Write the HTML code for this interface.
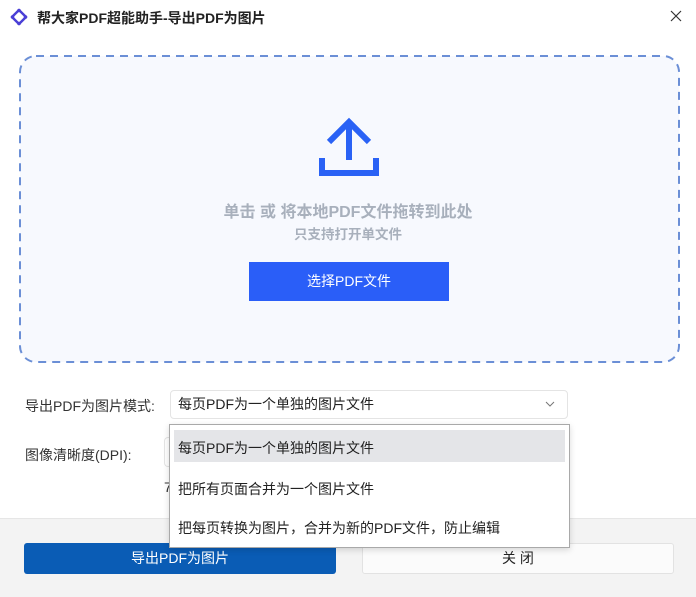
<!DOCTYPE html>
<html><head><meta charset="utf-8"><style>
*{margin:0;padding:0;box-sizing:border-box}
body{width:696px;height:597px;background:#fff;font-family:"Liberation Sans","Noto Sans CJK SC",sans-serif;position:relative;overflow:hidden;color:#333}
.abs{position:absolute}
.t{font-size:14px;white-space:nowrap}
</style></head><body>
<svg class="abs" style="left:10px;top:8px" width="18" height="18" viewBox="0 0 18 18"><path d="M9 2 L16 9 L9 16 L2 9 Z" fill="none" stroke="#4a3fd6" stroke-width="2.4" stroke-linejoin="round"/><circle cx="9" cy="2.5" r="1.8" fill="#4a3fd6"/><circle cx="15.5" cy="9" r="1.8" fill="#4a3fd6"/><circle cx="9" cy="15.5" r="1.8" fill="#4a3fd6"/><circle cx="2.5" cy="9" r="1.8" fill="#4a3fd6"/></svg>
<div class="abs t" style="left:37px;top:8px;font-weight:bold;color:#222">帮大家PDF超能助手-导出PDF为图片</div>
<svg class="abs" style="left:670px;top:10px" width="12" height="12"><path d="M1 1L11 11M11 1L1 11" stroke="#333" stroke-width="1.2"/></svg>

<svg class="abs" style="left:0;top:0" width="696" height="380"><rect x="20" y="56" width="659" height="306" rx="16" fill="#f7f9fe" stroke="#6b8fd6" stroke-width="2" stroke-dasharray="8 6"/>
<path d="M329 142 L349 122 L369 142 M349 122 L349 160" fill="none" stroke="#2a62f5" stroke-width="6"/>
<path d="M322 158 L322 173 L376 173 L376 158" fill="none" stroke="#2a62f5" stroke-width="6"/></svg>
<div class="abs" style="left:0;width:696px;top:198px;text-align:center;font-size:16px;font-weight:bold;color:#a8b0bc">单击 或 将本地PDF文件拖转到此处</div>
<div class="abs" style="left:0;width:696px;top:223px;text-align:center;font-size:13.5px;font-weight:bold;color:#a8b0bc">只支持打开单文件</div>
<div class="abs t" style="left:249px;top:262px;width:200px;height:39px;background:#2a5ef8;color:#fff;text-align:center;line-height:39px">选择PDF文件</div>

<div class="abs t" style="left:25px;top:396px;color:#333">导出PDF为图片模式:</div>
<div class="abs t" style="left:170px;top:390px;width:398px;height:29px;border:1px solid #e4e4e4;border-radius:4px;padding-left:7px;line-height:27px;color:#222">每页PDF为一个单独的图片文件</div>
<svg class="abs" style="left:545px;top:401px" width="10" height="6"><path d="M1 1L5 5L9 1" fill="none" stroke="#777" stroke-width="1"/></svg>
<div class="abs t" style="left:25px;top:445px;color:#333">图像清晰度(DPI):</div>
<div class="abs" style="left:164px;top:437px;width:10px;height:30px;border:1px solid #e4e4e4;border-right:none;border-radius:4px 0 0 4px"></div>
<div class="abs t" style="left:164px;top:479px;color:#333">7</div>

<div class="abs" style="left:0;top:518px;width:696px;height:79px;background:#f3f3f3;border-top:1px solid #e6e6e6"></div>
<div class="abs t" style="left:24px;top:543px;width:312px;height:31px;background:#0a5cb5;color:#fff;border-radius:3px;text-align:center;line-height:31px">导出PDF为图片</div>
<div class="abs t" style="left:362px;top:543px;width:312px;height:31px;background:#fbfbfb;border:1px solid #e2e2e2;border-radius:3px;text-align:center;line-height:29px;color:#222">关 闭</div>

<div class="abs" style="left:169px;top:424px;width:401px;height:124px;background:#fff;border:1px solid #a9a9a9;box-shadow:0 2px 6px rgba(0,0,0,.15)">
<div class="abs" style="left:4px;top:5px;width:391px;height:32px;background:#e4e5e8"></div>
<div class="abs t" style="left:8px;top:13px;color:#222">每页PDF为一个单独的图片文件</div>
<div class="abs t" style="left:8px;top:54px;color:#222">把所有页面合并为一个图片文件</div>
<div class="abs t" style="left:8px;top:93px;color:#222">把每页转换为图片，合并为新的PDF文件，防止编辑</div>
</div>
</body></html>
